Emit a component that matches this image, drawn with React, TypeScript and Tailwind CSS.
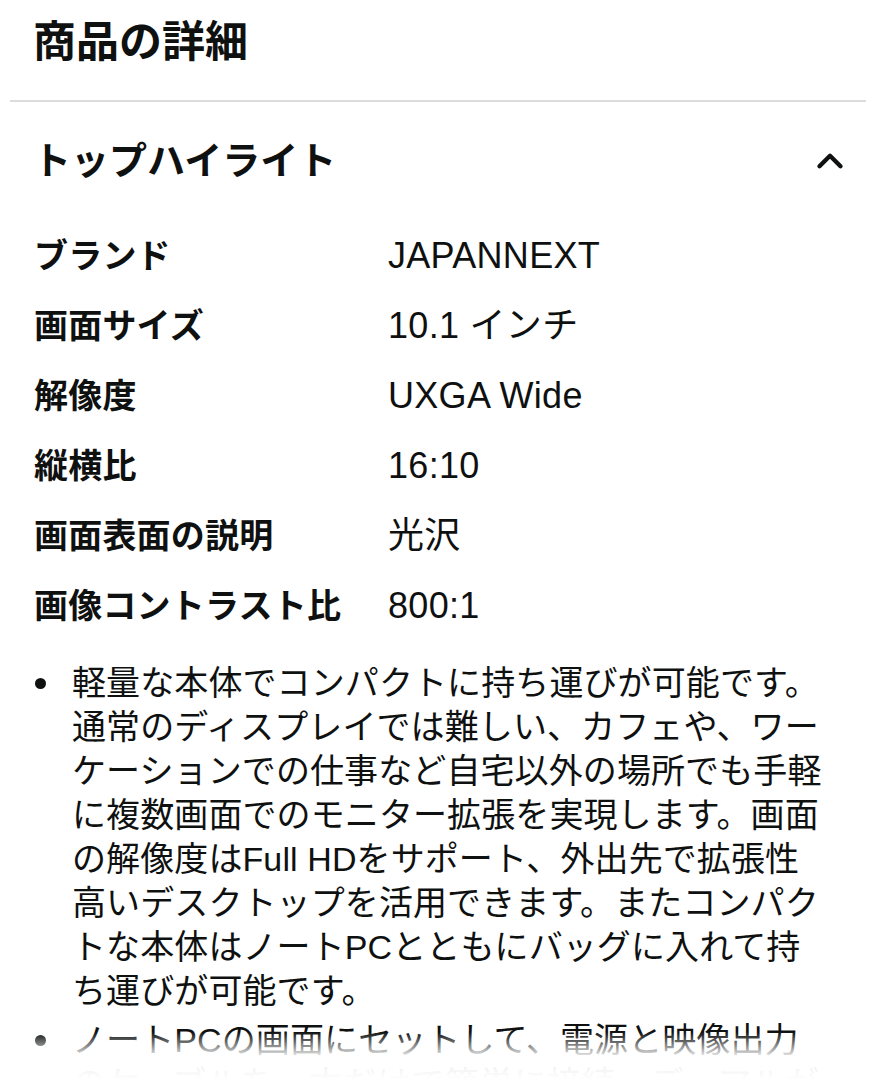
import { ChevronUp } from "lucide-react";

const font = {
  fontFamily: '"Liberation Sans", "Noto Sans CJK JP", sans-serif',
};

const specs: [string, string][] = [
  ["ブランド", "JAPANNEXT"],
  ["画面サイズ", "10.1 インチ"],
  ["解像度", "UXGA Wide"],
  ["縦横比", "16:10"],
  ["画面表面の説明", "光沢"],
  ["画像コントラスト比", "800:1"],
];

const bullets: string[][] = [
  [
    "軽量な本体でコンパクトに持ち運びが可能です。",
    "通常のディスプレイでは難しい、カフェや、ワー",
    "ケーションでの仕事など自宅以外の場所でも手軽",
    "に複数画面でのモニター拡張を実現します。画面",
    "の解像度はFull HDをサポート、外出先で拡張性",
    "高いデスクトップを活用できます。またコンパク",
    "トな本体はノートPCとともにバッグに入れて持",
    "ち運びが可能です。",
  ],
  [
    "ノートPCの画面にセットして、電源と映像出力",
    "のケーブルを一本だけで簡単に接続、デュアルが",
  ],
];

export default function App() {
  return (
    <div
      className="relative h-[1080px] w-[877px] overflow-hidden bg-white text-[#0f1111]"
      style={font}
    >
      <div className="px-[10px] pr-[11px]">
        {/* Title */}
        <h1 className="mt-[17px] mb-[33px] pl-[23px] text-[43px] font-bold leading-[50px]">
          商品の詳細
        </h1>
        <div className="h-[2px] bg-[#dcdcdc]" />

        <div className="pl-6 pr-[21px]">
          {/* Accordion header */}
          <div className="mt-[34px] flex h-[50px] items-center justify-between">
            <h2 className="text-[38px] font-bold leading-[50px] -ml-[1px]">
              トップハイライト
            </h2>
            <ChevronUp className="h-[42px] w-[42px] -mr-[6px]" strokeWidth={2.5} />
          </div>

          {/* Spec table */}
          <div className="mt-[35px]">
            {specs.map(([label, value]) => (
              <div key={label} className="flex h-[70px] items-center">
                <div className="w-[354px] shrink-0 text-[34px] font-bold tracking-[0.2px]">
                  {label}
                </div>
                <div className="text-[36px] tracking-[0.3px]">{value}</div>
              </div>
            ))}
          </div>

          {/* Bullets */}
          <ul className="mt-[20px] flex flex-col gap-[5px]">
            {bullets.map((lines, i) => (
              <li key={i} className="flex">
                <div className="flex h-[44px] w-[38px] shrink-0 items-center pl-[1px]">
                  <span className="h-[11px] w-[11px] rounded-full bg-[#0f1111]" />
                </div>
                <p className="text-[34px] tracking-[0.1px] leading-[44px] whitespace-nowrap">
                  {lines.map((l, j) => (
                    <span key={j} className="block">
                      {l}
                    </span>
                  ))}
                </p>
              </li>
            ))}
          </ul>
        </div>
      </div>

      {/* bottom fade */}
      <div className="pointer-events-none absolute inset-x-0 bottom-0 h-[48px] bg-gradient-to-b from-white/0 via-white/90 to-white" />
    </div>
  );
}
